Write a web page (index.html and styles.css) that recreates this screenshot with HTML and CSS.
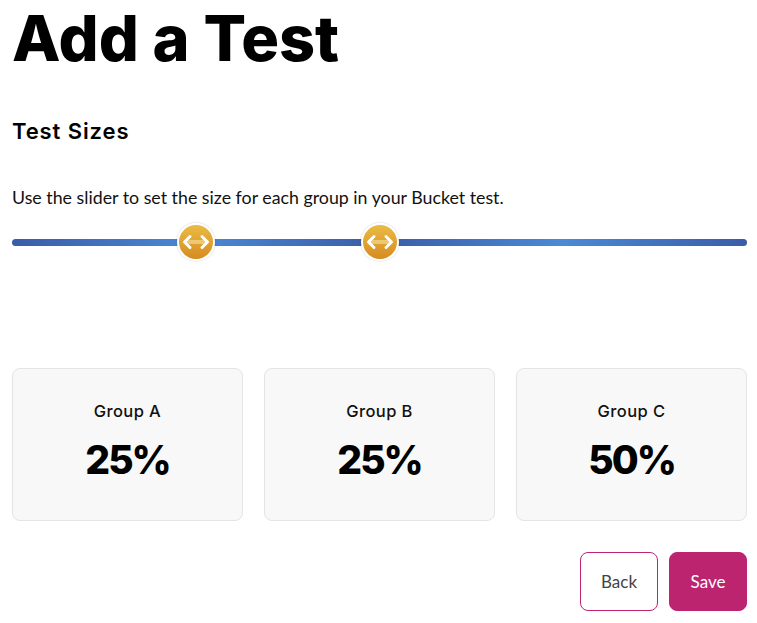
FILE: index.html
```html
<!DOCTYPE html>
<html lang="en">
<head>
<meta charset="utf-8">
<title>Add a Test</title>
<link rel="stylesheet" href="styles.css">
</head>
<body>
<main class="page">
  <h1 class="title">Add a Test</h1>
  <h2 class="subtitle">Test Sizes</h2>
  <p class="hint">Use the slider to set the size for each group in your Bucket test.</p>

  <div class="slider">
    <div class="track"></div>
    <div class="thumb" style="left: 25%">
      <svg viewBox="0 0 38 38" width="38" height="38" aria-hidden="true">
        <line x1="10" y1="19" x2="28" y2="19" stroke="#fff3c8" stroke-opacity="0.45" stroke-width="4" stroke-linecap="round"/>
        <polyline points="13,13.5 7.5,19 13,24.5" fill="none" stroke="#fff" stroke-width="3" stroke-linecap="round" stroke-linejoin="round"/>
        <polyline points="25,13.5 30.5,19 25,24.5" fill="none" stroke="#fff" stroke-width="3" stroke-linecap="round" stroke-linejoin="round"/>
      </svg>
    </div>
    <div class="thumb" style="left: 50%">
      <svg viewBox="0 0 38 38" width="38" height="38" aria-hidden="true">
        <line x1="10" y1="19" x2="28" y2="19" stroke="#fff3c8" stroke-opacity="0.45" stroke-width="4" stroke-linecap="round"/>
        <polyline points="13,13.5 7.5,19 13,24.5" fill="none" stroke="#fff" stroke-width="3" stroke-linecap="round" stroke-linejoin="round"/>
        <polyline points="25,13.5 30.5,19 25,24.5" fill="none" stroke="#fff" stroke-width="3" stroke-linecap="round" stroke-linejoin="round"/>
      </svg>
    </div>
  </div>

  <section class="groups">
    <div class="card">
      <div class="card-label">Group A</div>
      <div class="card-value">25%</div>
    </div>
    <div class="card">
      <div class="card-label">Group B</div>
      <div class="card-value">25%</div>
    </div>
    <div class="card">
      <div class="card-label">Group C</div>
      <div class="card-value">50%</div>
    </div>
  </section>

  <div class="actions">
    <button class="btn btn-outline" type="button">Back</button>
    <button class="btn btn-primary" type="button">Save</button>
  </div>
</main>
</body>
</html>
```

FILE: styles.css
```css
html, body {
  margin: 0;
  padding: 0;
  background: #ffffff;
}

body {
  font-family: "Lato", "Noto Sans", sans-serif;
  color: #111;
}

.page {
  padding: 0 10px 0 12px;
}

.title {
  font-family: "Inter", "Noto Sans", sans-serif;
  font-weight: 800;
  font-size: 63px;
  letter-spacing: 0;
  line-height: 76px;
  margin: 0;
  color: #000;
}

.subtitle {
  font-family: "Inter", "Noto Sans", sans-serif;
  font-weight: 600;
  font-size: 22px;
  letter-spacing: 0.9px;
  line-height: 28px;
  margin: 41px 0 0 0;
  color: #000;
}

.hint {
  font-size: 17.8px;
  line-height: 24px;
  margin: 40px 0 0 0;
  color: #111;
}

.slider {
  position: relative;
  margin-top: 14px;
  height: 38px;
  display: flex;
  align-items: center;
}

.track {
  flex: 1;
  height: 7px;
  border-radius: 4px;
  background: linear-gradient(to right, #3a5ca8 0%, #4a89d5 25%, #3a5ca8 50%, #4a8ad6 75%, #3a5ca8 100%);
}

.thumb {
  position: absolute;
  top: 0;
  width: 38px;
  height: 38px;
  margin-left: -19px;
  border-radius: 50%;
  box-sizing: border-box;
  border: 2px solid #fff;
  background: linear-gradient(to bottom, #ebbb45 0%, #d68b20 100%);
  box-shadow: 0 0 2px rgba(0, 0, 0, 0.25);
  display: flex;
  align-items: center;
  justify-content: center;
  overflow: hidden;
}

.thumb svg {
  flex: none;
  display: block;
}

.groups {
  display: grid;
  grid-template-columns: repeat(3, 1fr);
  gap: 21px;
  margin-top: 107px;
}

.card {
  height: 153px;
  box-sizing: border-box;
  border: 1px solid #e4e4e4;
  border-radius: 8px;
  background: #f8f8f8;
  display: flex;
  flex-direction: column;
  align-items: center;
  padding-top: 32px;
}

.card-label {
  font-family: "Inter", "Noto Sans", sans-serif;
  font-weight: 500;
  font-size: 16.5px;
  letter-spacing: 0.4px;
  line-height: 20px;
  color: #111;
}

.card-value {
  font-family: "Inter", "Noto Sans", sans-serif;
  font-weight: 800;
  font-size: 39px;
  letter-spacing: -2px;
  line-height: 48px;
  margin-top: 15px;
  color: #000;
}

.actions {
  display: flex;
  justify-content: flex-end;
  gap: 11px;
  margin-top: 31px;
}

.btn {
  width: 78px;
  height: 59px;
  box-sizing: border-box;
  border-radius: 8px;
  border: 1px solid #bd2572;
  font-family: "Lato", "Noto Sans", sans-serif;
  font-size: 17px;
  cursor: pointer;
}

.btn-outline {
  background: #fff;
  color: #444;
}

.btn-primary {
  background: #bc2470;
  color: #fff;
}
```
